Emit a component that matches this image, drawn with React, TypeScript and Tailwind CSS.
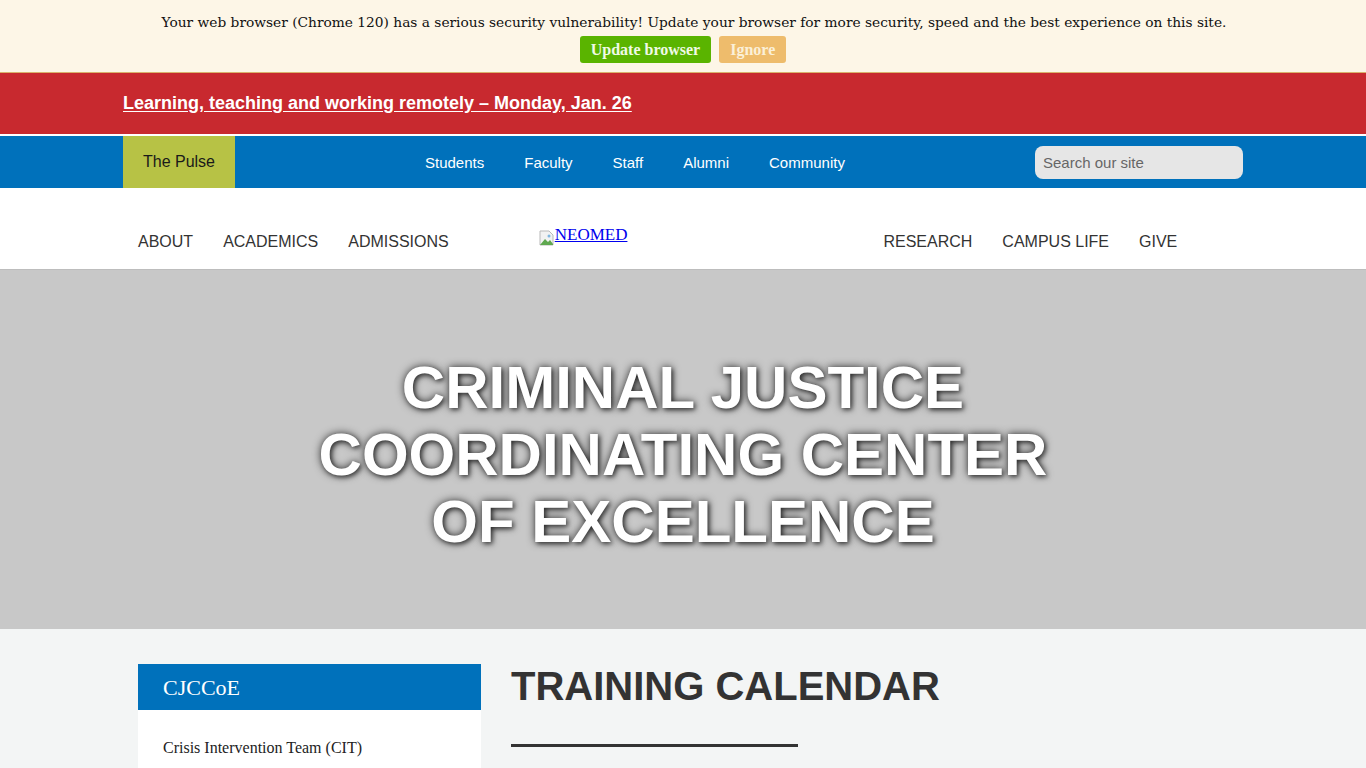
import React from "react";

const serif = { fontFamily: '"DejaVu Serif", "Liberation Serif", serif' };
const times = { fontFamily: '"Liberation Serif", serif' };
const sans = { fontFamily: '"Liberation Sans", Arial, sans-serif' };

function BrokenImage() {
  return (
    <svg width="16" height="16" viewBox="0 0 16 16" className="inline-block mb-[2px]">
      <path d="M1 1h9l4 4v10H1z" fill="#f2f2f2" stroke="#b9b9b9" />
      <path d="M1 15l5-6 3 3 2-2 3 4v1z" fill="#5fa84f" />
      <circle cx="10" cy="6" r="1.5" fill="#7fb7e0" />
    </svg>
  );
}

export default function App() {
  return (
    <div className="min-h-screen bg-[#f3f5f5]" style={sans}>
      {/* Browser update notice */}
      <div className="bg-[#fdf6e7] border-b border-[#d9b26c] h-[73px] pt-[10px] text-center">
        <p className="text-[13.75px] leading-[24px] text-[#111] pl-[22px]" style={serif}>
          Your web browser (Chrome 120) has a serious security vulnerability! Update your browser for more security, speed and the best experience on this site.
        </p>
        <div className="mt-[2px] flex justify-center gap-2" style={times}>
          <span className="bg-[#5ab400] text-[#f0fae6] text-[16px] font-bold leading-[27px] px-[11px] rounded-[3px]">
            Update browser
          </span>
          <span className="bg-[#eebc6c] text-[#fbf0d8] text-[16px] font-bold leading-[27px] px-[11px] rounded-[3px]">
            Ignore
          </span>
        </div>
      </div>

      {/* Alert bar */}
      <div className="bg-[#c8292f] h-[61px] flex items-center px-[123px] border-b-[2px] border-white box-content">
        <a href="#" className="text-white font-bold text-[18px] underline underline-offset-2">
          Learning, teaching and working remotely – Monday, Jan. 26
        </a>
      </div>

      {/* Utility nav */}
      <div className="bg-[#0071bb] h-[52px] flex items-stretch pl-[123px] pr-[123px]">
        <div className="bg-[#b7c245] w-[112px] flex items-center justify-center text-[16px] text-[#1a1a1a]">
          The Pulse
        </div>
        <nav className="flex items-center gap-[40px] ml-[190px] pt-[2px] text-white text-[15px]">
          <a href="#">Students</a>
          <a href="#">Faculty</a>
          <a href="#">Staff</a>
          <a href="#">Alumni</a>
          <a href="#">Community</a>
        </nav>
        <div className="ml-auto flex items-center">
          <input
            placeholder="Search our site"
            className="w-[208px] h-[33px] rounded-[8px] bg-[#e6e6e6] px-[8px] text-[15px] text-[#555] placeholder:text-[#666] outline-none"
          />
        </div>
      </div>

      {/* Main nav */}
      <div className="bg-white h-[81px] flex items-start pt-[30px] text-[#333] text-[16px]">
        <nav className="flex gap-[30px] pl-[138px] pt-[12px]">
          <a href="#">ABOUT</a>
          <a href="#">ACADEMICS</a>
          <a href="#">ADMISSIONS</a>
        </nav>
        <a href="#" className="ml-[90px] mt-[4px] text-[#0000ee] underline text-[17px] flex items-end" style={times}>
          <BrokenImage />
          NEOMED
        </a>
        <nav className="flex gap-[30px] ml-[256px] pt-[12px]">
          <a href="#">RESEARCH</a>
          <a href="#">CAMPUS LIFE</a>
          <a href="#">GIVE</a>
        </nav>
      </div>

      {/* Hero */}
      <div className="bg-[#c8c8c8] h-[360px] flex items-center justify-center border-t border-[#bdbdbd]">
        <h1
          className="text-white font-bold text-[60px] leading-[67px] text-center uppercase mt-[10px]"
          style={{ textShadow: "0 0 8px rgba(0,0,0,0.75), 2px 2px 4px rgba(0,0,0,0.5)" }}
        >
          Criminal Justice
          <br />
          Coordinating Center
          <br />
          of Excellence
        </h1>
      </div>

      {/* Content */}
      <div className="flex gap-[30px] pl-[138px] pt-[35px]">
        <aside className="w-[343px]">
          <div className="bg-[#0071bb] h-[46px] flex items-center px-[25px] text-white text-[22px]" style={times}>
            CJCCoE
          </div>
          <div className="bg-white pt-[26px] pb-[20px] px-[25px] text-[16px] text-[#222]" style={times}>
            Crisis Intervention Team (CIT)
          </div>
        </aside>
        <main>
          <h2 className="text-[40px] font-bold text-[#333] leading-[44px]">TRAINING CALENDAR</h2>
          <div className="mt-[36px] w-[287px] h-[3px] bg-[#333]" />
        </main>
      </div>
    </div>
  );
}
